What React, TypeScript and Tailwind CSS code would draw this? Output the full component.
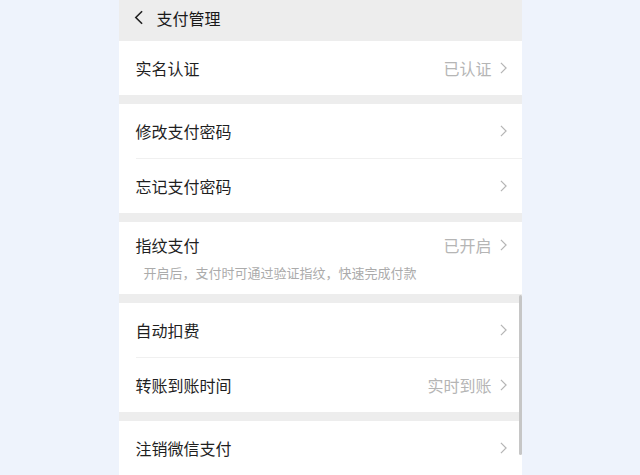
import React from 'react';

const font = { fontFamily: '"Noto Sans CJK SC", "Noto Sans", sans-serif' };

const Chevron = ({ className = '' }: { className?: string }) => (
  <svg viewBox="0 0 8 14" className={className} fill="none" stroke="currentColor" strokeWidth="1.4">
    <path d="M1 1l6 6-6 6" />
  </svg>
);

type Row = { title: string; value?: string; note?: string };

const groups: Row[][] = [
  [{ title: '实名认证', value: '已认证' }],
  [{ title: '修改支付密码' }, { title: '忘记支付密码' }],
  [{ title: '指纹支付', value: '已开启', note: '开启后，支付时可通过验证指纹，快速完成付款' }],
  [{ title: '自动扣费' }, { title: '转账到账时间', value: '实时到账' }],
  [{ title: '注销微信支付' }],
];

function ItemRow({ row, last }: { row: Row; last: boolean }) {
  if (row.note) {
    return (
      <div className="pl-[17px] pr-[15px] h-[72px] flex flex-col justify-center">
        <div className="flex items-center justify-between h-[24px]">
          <span className="text-[16px] text-[#1f1f1f]">{row.title}</span>
          <span className="flex items-center gap-[8px] text-[16px] text-[#b5b5b5]">
            {row.value}
            <Chevron className="w-[7px] h-[12px] text-[#b5b5b5]" />
          </span>
        </div>
        <div className="text-[13px] text-[#ababab] pl-[8px] mt-[6px]">{row.note}</div>
      </div>
    );
  }
  return (
    <div className="pl-[17px]">
      <div className={`pr-[15px] flex items-center justify-between ${last ? 'h-[54px]' : 'h-[55px] border-b border-[#f0f0f0]'}`}>
        <span className="text-[16px] text-[#1f1f1f]">{row.title}</span>
        <span className="flex items-center gap-[8px] text-[16px] text-[#b5b5b5]">
          {row.value}
          <Chevron className="w-[7px] h-[12px] text-[#b5b5b5]" />
        </span>
      </div>
    </div>
  );
}

export default function App() {
  return (
    <div className="w-[640px] h-[475px] overflow-hidden bg-[#eef3fc] flex justify-center" style={font}>
      <div className="relative w-[403px] bg-[#ededed] flex flex-col">
        <div className="h-[41px] flex items-center pl-[15px] pb-[6px] gap-[14px]">
          <svg viewBox="0 0 10 16" className="w-[9px] h-[15px] text-[#222]" fill="none" stroke="currentColor" strokeWidth="1.8">
            <path d="M9 1L2 8l7 7" />
          </svg>
          <span className="text-[16px] text-[#1a1a1a]">支付管理</span>
        </div>
        <div className="flex flex-col gap-[9px]">
          {groups.map((g, i) => (
            <div key={i} className="bg-white">
              {g.map((row, j) => (
                <ItemRow key={j} row={row} last={j === g.length - 1} />
              ))}
            </div>
          ))}
        </div>
        <div className="absolute right-0 top-[295px] w-[3px] h-[160px] bg-[#c6c6c6] rounded-[2px]" />
      </div>
    </div>
  );
}
